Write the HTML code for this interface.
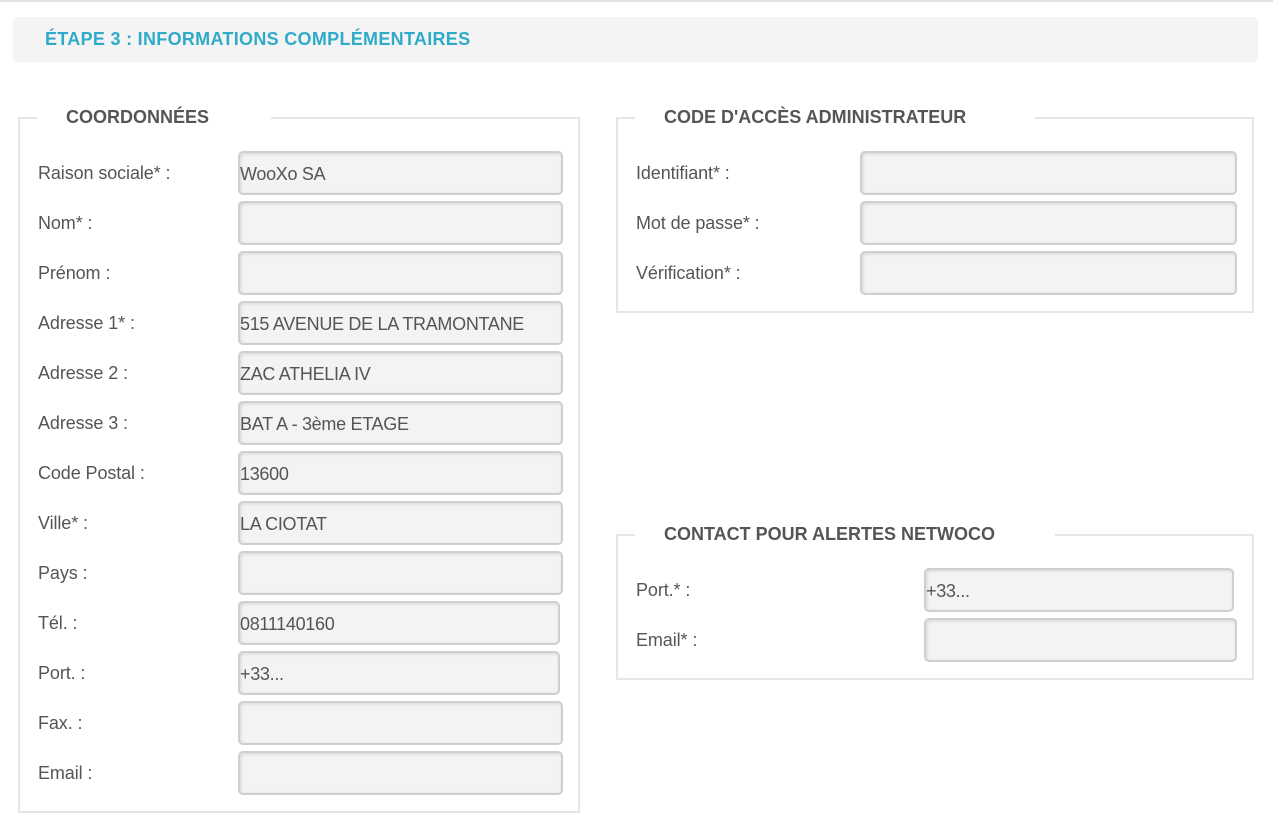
<!DOCTYPE html>
<html><head><meta charset="utf-8"><style>
*{margin:0;padding:0;box-sizing:border-box}
body{width:1273px;height:829px;background:#fff;font-family:"Liberation Sans",sans-serif;position:relative;overflow:hidden;color:#555}
.topline{position:absolute;left:0;top:0;width:1273px;height:2px;background:#e2e2e2}
.hdr{position:absolute;left:13px;top:17px;width:1245px;height:45px;background:#f4f4f4;border-radius:5px}
.hdr span{position:absolute;left:32px;top:12px;font-weight:bold;font-size:18px;color:#2fabc9;letter-spacing:0.3px}
.fs{position:absolute;border:2px solid #e6e6e6}
.lg{position:absolute;background:#fff;font-weight:bold;font-size:18px;color:#555;top:-12px;height:22px;padding-left:29px;letter-spacing:0px}
.lb{position:absolute;font-size:18px;color:#555;letter-spacing:-0.1px}
.in{position:absolute;height:44px;background:#f3f3f3;border:2px solid #cfcfcf;border-radius:5px;box-shadow:inset 1px 1px 3px rgba(0,0,0,.12);font-size:18px;color:#555;padding-left:0;line-height:42px;letter-spacing:-0.3px}
</style></head><body>
<div class="topline"></div>
<div class="hdr"><span>ÉTAPE 3 : INFORMATIONS COMPLÉMENTAIRES</span></div>

<div class="fs" style="left:18px;top:117px;width:562px;height:696px">
<div class="lg" style="left:17px;width:234px">COORDONNÉES</div></div>
<div class="fs" style="left:616px;top:117px;width:638px;height:196px">
<div class="lg" style="left:17px;width:400px">CODE D'ACCÈS ADMINISTRATEUR</div></div>
<div class="fs" style="left:616px;top:534px;width:638px;height:146px">
<div class="lg" style="left:17px;width:420px">CONTACT POUR ALERTES NETWOCO</div></div>

<div class="lb" style="left:38px;top:163px">Raison sociale* :</div><div class="in" style="left:238px;top:151px;width:325px">WooXo SA</div>
<div class="lb" style="left:38px;top:213px">Nom* :</div><div class="in" style="left:238px;top:201px;width:325px"></div>
<div class="lb" style="left:38px;top:263px">Prénom :</div><div class="in" style="left:238px;top:251px;width:325px"></div>
<div class="lb" style="left:38px;top:313px">Adresse 1* :</div><div class="in" style="left:238px;top:301px;width:325px">515 AVENUE DE LA TRAMONTANE</div>
<div class="lb" style="left:38px;top:363px">Adresse 2 :</div><div class="in" style="left:238px;top:351px;width:325px">ZAC ATHELIA IV</div>
<div class="lb" style="left:38px;top:413px">Adresse 3 :</div><div class="in" style="left:238px;top:401px;width:325px">BAT A - 3ème ETAGE</div>
<div class="lb" style="left:38px;top:463px">Code Postal :</div><div class="in" style="left:238px;top:451px;width:325px">13600</div>
<div class="lb" style="left:38px;top:513px">Ville* :</div><div class="in" style="left:238px;top:501px;width:325px">LA CIOTAT</div>
<div class="lb" style="left:38px;top:563px">Pays :</div><div class="in" style="left:238px;top:551px;width:325px"></div>
<div class="lb" style="left:38px;top:613px">Tél. :</div><div class="in" style="left:238px;top:601px;width:322px">0811140160</div>
<div class="lb" style="left:38px;top:663px">Port. :</div><div class="in" style="left:238px;top:651px;width:322px">+33...</div>
<div class="lb" style="left:38px;top:713px">Fax. :</div><div class="in" style="left:238px;top:701px;width:325px"></div>
<div class="lb" style="left:38px;top:763px">Email :</div><div class="in" style="left:238px;top:751px;width:325px"></div>

<div class="lb" style="left:636px;top:163px">Identifiant* :</div><div class="in" style="left:860px;top:151px;width:377px"></div>
<div class="lb" style="left:636px;top:213px">Mot de passe* :</div><div class="in" style="left:860px;top:201px;width:377px"></div>
<div class="lb" style="left:636px;top:263px">Vérification* :</div><div class="in" style="left:860px;top:251px;width:377px"></div>

<div class="lb" style="left:636px;top:580px">Port.* :</div><div class="in" style="left:924px;top:568px;width:310px">+33...</div>
<div class="lb" style="left:636px;top:630px">Email* :</div><div class="in" style="left:924px;top:618px;width:313px"></div>
</body></html>
